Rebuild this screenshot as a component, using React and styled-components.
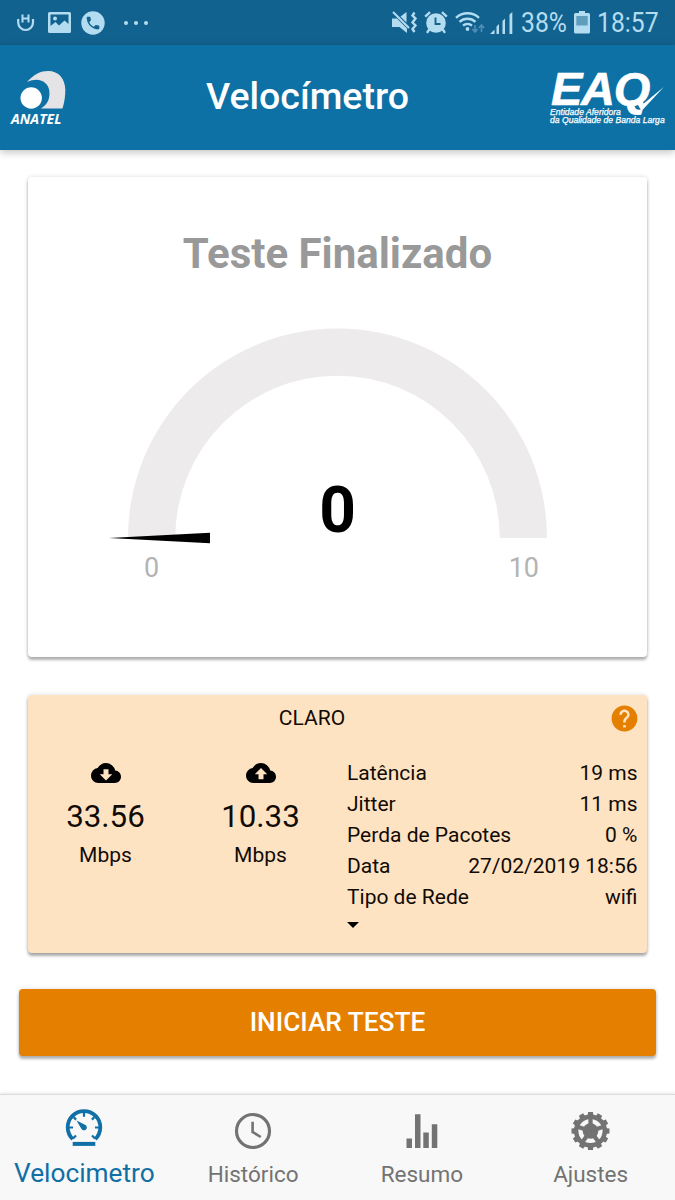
import React from "react";
import styled, { createGlobalStyle } from "styled-components";
import { MdCloudDownload, MdCloudUpload, MdHelp } from "react-icons/md";

const GlobalStyle = createGlobalStyle`
  * {
    box-sizing: border-box;
  }
  body {
    margin: 0;
    background: #fff;
    font-family: Roboto, "Liberation Sans", sans-serif;
  }
  svg {
    display: block;
    flex: none;
  }
`;

const details = [
  { label: "Latência", value: "19 ms" },
  { label: "Jitter", value: "11 ms" },
  { label: "Perda de Pacotes", value: "0 %" },
  { label: "Data", value: "27/02/2019 18:56" },
  { label: "Tipo de Rede", value: "wifi" },
];

const polar = (r, deg) => {
  const a = (deg * Math.PI) / 180;
  return `${(r * Math.cos(a)).toFixed(2)} ${(r * Math.sin(a)).toFixed(2)}`;
};

const UberIcon = () => (
  <svg width="18" height="18" viewBox="0 0 18 18" fill="none" stroke="#b4dcf0" strokeWidth="2.2">
    <path d="M1.200 5v3.500a7.400 7.500 0 0 0 14.800 0V5" />
    <path d="M5.500 0.500v8M11.500 0.500v8M5.500 4.500h6" strokeWidth="2" />
  </svg>
);

const PictureIcon = () => (
  <svg width="23" height="21" viewBox="0 0 23 21">
    <path
      fill="#b4dcf0"
      fillRule="evenodd"
      d="M1.5 0h20A1.5 1.5 0 0 1 23 1.500v18a1.500 1.500 0 0 1-1.500 1.500h-20A1.500 1.500 0 0 1 0 19.500v-18A1.500 1.500 0 0 1 1.500 0zM2.500 2.500V14l5-4 3.500 3.500 5.500-5 4 3.500V2.500zM7 4.600a2 2 0 1 1 0 4 2 2 0 0 1 0-4z"
    />
  </svg>
);

const PhoneIcon = () => (
  <svg width="24" height="24" viewBox="0 0 24 24">
    <circle cx="12" cy="12" r="11.700" fill="#b4dcf0" />
    <path
      fill="#15628f"
      transform="translate(3.600 3.600) scale(.700)"
      d="M6.600 10.800c1.440 2.830 3.760 5.140 6.590 6.590l2.200-2.200c.27-.27.67-.36 1.020-.24 1.120.37 2.330.57 3.590.57.550 0 1 .45 1 1V20c0 .55-.45 1-1 1C10.600 21 3 13.400 3 4c0-.55.45-1 1-1h3.500c.55 0 1 .45 1 1 0 1.250.2 2.450.57 3.570.11.35.03.74-.25 1.020z"
    />
  </svg>
);

const MuteIcon = () => (
  <svg width="25" height="23" viewBox="0 0 25 23">
    <path fill="#b4dcf0" d="M0 7.500h5L15 17.500V22L7.500 16H0zM8.500 5.500L14.500 1v10.500z" />
    <path d="M1 1l16 16" stroke="#b4dcf0" strokeWidth="2.200" />
    <path d="M22.500 1.500l-2 3 3 3-3 4 3 3-3 3.500 2 3" fill="none" stroke="#b4dcf0" strokeWidth="2.400" />
  </svg>
);

const AlarmIcon = () => (
  <svg width="24" height="23" viewBox="0 0 24 23">
    <circle cx="12" cy="12" r="9.800" fill="#b4dcf0" />
    <path d="M1.200 5.600L6 1.200M22.800 5.600L18 1.200M5.500 18L3 21.800M18.500 18l2.500 3.800" stroke="#b4dcf0" strokeWidth="2.400" />
    <path d="M11.500 6.500V13h5" fill="none" stroke="#15628f" strokeWidth="1.900" />
  </svg>
);

const WifiIcon = () => (
  <svg width="30" height="23" viewBox="0 0 30 23">
    <g fill="none" stroke="#b4dcf0" strokeWidth="2.400">
      <path d="M1 6.800a17 17 0 0 1 23 0" />
      <path d="M4.500 10.800a12 12 0 0 1 16 0" />
      <path d="M8 14.600a7 7 0 0 1 9 0" />
    </g>
    <circle cx="12.500" cy="18" r="1.900" fill="#b4dcf0" />
    <path d="M20 14v7M17.300 18l2.700 3 2.700-3M26.500 21v-7M23.800 17l2.700-3 2.700 3" fill="none" stroke="#4c8fb6" strokeWidth="1.700" />
  </svg>
);

const SignalIcon = () => (
  <svg width="23" height="22" viewBox="0 0 23 22" fill="#b4dcf0">
    <path d="M0 22l4.500-4.500V22zM6.500 14.500L9 12v10H6.500zM12.500 9l2.500-2.400V22h-2.500zM19.500 2.500L22.300 0v22h-2.800z" />
  </svg>
);

const BatteryIcon = () => (
  <svg width="16" height="23" viewBox="0 0 16 23">
    <path fill="#b4dcf0" d="M5 0h6v2h3.500A1.500 1.500 0 0 1 16 3.500V21a1.500 1.500 0 0 1-1.500 1.500h-13A1.500 1.500 0 0 1 0 21V3.500A1.500 1.500 0 0 1 1.500 2H5z" />
    <path fill="#5f9dbd" d="M2.300 5h11.400v9.500H2.300z" />
  </svg>
);

const AnatelMark = () => (
  <svg width="46" height="38" viewBox="0 0 46 38">
    <path fill="#e4e4e6" d="M7 11C14 3 21 0 28 0c11 0 17 8 17.300 18.500.1 6.500-.8 12.500-2.800 19H21c7-4.500 9-10 8.300-17.500C28.600 12 20 5 7 11z" />
    <circle cx="11.200" cy="27" r="10.700" fill="#fff" />
  </svg>
);

const EaqCheck = () => (
  <svg width="34" height="24" viewBox="0 0 34 24">
    <path fill="#fff" d="M6 14.500l5.500-1.500 2.300 3.500L33.800 0 11.500 24z" />
  </svg>
);

const Gauge = () => (
  <svg width="440" height="220" viewBox="0 0 440 220">
    <path d="M19 211A209.500 209.500 0 0 1 438 211H390.750A162.250 162.250 0 0 0 66.250 211z" fill="#edebec" />
    <path d="M0 211l101-5.300v10.600z" fill="#000" />
  </svg>
);

const SpeedometerIcon = () => (
  <svg width="38" height="38" viewBox="0 0 38 38" fill="none" stroke="#106fa5">
    <path d="M7.800 30.200A16.300 16.300 0 1 1 30.200 30.200" strokeWidth="3.800" />
    <path d="M19 4v3.800M4 18.500h4M34 18.500h-4M8.500 8l2.600 2.600M29.500 8l-2.600 2.600M8 29.500l3-3M30 29.500l-3-3" strokeWidth="2.200" />
    <path d="M11.500 11.500l9 4.500a2.900 2.900 0 1 1-4 4z" fill="#106fa5" stroke="none" />
    <path d="M7.700 34.900h22.600" strokeWidth="4" />
  </svg>
);

const ClockIcon = () => (
  <svg width="38" height="38" viewBox="0 0 38 38" fill="none" stroke="#737373">
    <circle cx="19" cy="19" r="16.500" strokeWidth="3.200" />
    <path d="M18.600 9.800v10.200l8.200 5" strokeWidth="2.600" />
  </svg>
);

const BarsIcon = () => (
  <svg width="38" height="38" viewBox="0 0 38 38" fill="#737373">
    <path d="M3.500 26.500H9V36H3.500zM12 2.300h5.500V36H12zM20.300 20.500h5.500V36h-5.500zM28.800 12.200h5.500V36h-5.500z" />
  </svg>
);

const GearIcon = () => (
  <svg width="39" height="38" viewBox="-19.500 -19.500 39 39">
    {Array.from({ length: 12 }, (_, i) => (
      <path key={i} d="M-2.500-19.500h5l.6 4.500h-6.200z" fill="#737373" transform={`rotate(${i * 30})`} />
    ))}
    <circle r="14.700" fill="none" stroke="#737373" strokeWidth="4.600" />
    <circle r="8" fill="#737373" />
    {[-90, -18, 54, 126, 198].map((deg) => (
      <path key={deg} d={`M0 0L${polar(14, deg)}`} stroke="#737373" strokeWidth="4.400" />
    ))}
  </svg>
);

const tabs = [
  { label: "Velocimetro", Icon: SpeedometerIcon, active: true },
  { label: "Histórico", Icon: ClockIcon },
  { label: "Resumo", Icon: BarsIcon },
  { label: "Ajustes", Icon: GearIcon },
];

const App = () => {
  return (
    <>
      <GlobalStyle />
      <Screen>
        <StatusBar>
          <Notifications>
            <UberIcon />
            <PictureIcon />
            <PhoneIcon />
            <Dots>
              <Dot />
              <Dot />
              <Dot />
            </Dots>
          </Notifications>
          <SystemIcons>
            <MuteIcon />
            <AlarmIcon />
            <Network>
              <WifiIcon />
              <SignalIcon />
            </Network>
            <StatusText $width={46}>38%</StatusText>
            <BatteryIcon />
            <StatusText $width={62}>18:57</StatusText>
          </SystemIcons>
        </StatusBar>

        <Header>
          <Anatel>
            <AnatelMark />
            <AnatelName>ANATEL</AnatelName>
          </Anatel>
          <Title>Velocímetro</Title>
          <Eaq>
            <EaqName>EAQ</EaqName>
            <EaqCheckBox>
              <EaqCheck />
            </EaqCheckBox>
            <EaqCaption>
              Entidade Aferidora
              <br />
              da Qualidade de Banda Larga
            </EaqCaption>
          </Eaq>
        </Header>

        <Content>
          <GaugeCard>
            <TestState>Teste Finalizado</TestState>
            <GaugeBox>
              <Gauge />
              <Speed>0</Speed>
            </GaugeBox>
            <Scale>
              <span>0</span>
              <span>10</span>
            </Scale>
          </GaugeCard>

          <ResultCard>
            <ResultHeader>
              <Operator>CLARO</Operator>
              <MdHelp size={31} color="#e57f00" />
            </ResultHeader>
            <ResultBody>
              <Rate>
                <MdCloudDownload size={30} />
                <RateValue>33.56</RateValue>
                <RateUnit>Mbps</RateUnit>
              </Rate>
              <Rate>
                <MdCloudUpload size={30} />
                <RateValue>10.33</RateValue>
                <RateUnit>Mbps</RateUnit>
              </Rate>
              <Details>
                {details.map(({ label, value }) => (
                  <DetailRow key={label}>
                    <span>{label}</span>
                    <span>{value}</span>
                  </DetailRow>
                ))}
                <Caret />
              </Details>
            </ResultBody>
          </ResultCard>

          <StartButton type="button">INICIAR TESTE</StartButton>
        </Content>

        <TabBar>
          {tabs.map(({ label, Icon, active }) => (
            <Tab key={label} $active={active}>
              <Icon />
              <TabLabel $active={active}>{label}</TabLabel>
            </Tab>
          ))}
        </TabBar>
      </Screen>
    </>
  );
};

const Screen = styled.div`
  display: flex;
  flex-direction: column;
  width: 675px;
  height: 1200px;
  overflow: hidden;
  background: #fff;
`;

const StatusBar = styled.div`
  display: flex;
  justify-content: space-between;
  align-items: center;
  height: 45px;
  padding: 0 16px 0 17px;
  background: #12628f;
`;
const Notifications = styled.div`
  display: flex;
  align-items: center;
  gap: 12px;
  svg:first-child {
    margin-right: 1px;
  }
  svg:nth-child(3) {
    margin-left: -2px;
  }
`;
const Dots = styled.div`
  display: flex;
  gap: 6px;
  margin-left: 7px;
`;
const Dot = styled.span`
  width: 4px;
  height: 4px;
  border-radius: 50%;
  background: #b4dcf0;
`;
const SystemIcons = styled.div`
  display: flex;
  align-items: center;
  gap: 7px;
`;
const Network = styled.div`
  display: flex;
  align-items: center;
  gap: 5px;
  margin-right: 1px;
`;
const StatusText = styled.span`
  width: ${(props) => props.$width}px;
  padding-top: 2px;
  color: #b4dcf0;
  font-size: 27px;
  line-height: 43px;
  white-space: nowrap;
  transform: scaleX(0.915);
  transform-origin: left;
`;

const Header = styled.header`
  position: relative;
  z-index: 1;
  display: flex;
  justify-content: space-between;
  height: 105px;
  padding: 0 11px 0 10px;
  background: #0e71a6;
  box-shadow: 0 2px 8px rgba(0, 0, 0, 0.26);
`;
const Anatel = styled.div`
  display: flex;
  flex-direction: column;
  width: 55px;
  padding-top: 26px;
  svg {
    margin-left: 9.500px;
  }
`;
const AnatelName = styled.span`
  margin: 2px 0 0 1px;
  color: #fff;
  font: italic bold 14px/15px "Open Sans", sans-serif;
`;
const Title = styled.h1`
  margin: 0;
  color: #fff;
  font-size: 37.500px;
  font-weight: 500;
  line-height: 103px;
`;
const Eaq = styled.div`
  position: relative;
  width: 114px;
  padding-top: 23px;
  color: #fff;
`;
const EaqName = styled.div`
  padding-left: 1px;
  font: italic bold 47px/42px "Liberation Sans", sans-serif;
  letter-spacing: -1.300px;
  -webkit-text-stroke: 0.600px #fff;
`;
const EaqCheckBox = styled.div`
  position: absolute;
  top: 42px;
  right: 0;
`;
const EaqCaption = styled.div`
  margin-top: -1px;
  font: italic 8.600px/7.500px "Liberation Sans", sans-serif;
  -webkit-text-stroke: 0.250px #fff;
  white-space: nowrap;
`;

const Content = styled.main`
  display: flex;
  flex-direction: column;
  flex: 1;
  padding: 27px 19px 0;
`;
const GaugeCard = styled.section`
  display: flex;
  flex-direction: column;
  height: 480px;
  margin: 0 9px;
  padding-top: 51px;
  border-radius: 4px;
  background: #fff;
  box-shadow: 0 3px 3px rgba(0, 0, 0, 0.28), 0 0 4px rgba(0, 0, 0, 0.16);
`;
const TestState = styled.h2`
  margin: 0;
  color: #999;
  font-size: 42px;
  font-weight: 700;
  line-height: 52px;
  text-align: center;
`;
const GaugeBox = styled.div`
  position: relative;
  height: 220px;
  margin: 47px 0 0 81px;
`;
const Speed = styled.div`
  position: absolute;
  top: 148px;
  left: 178.500px;
  width: 100px;
  font-size: 64px;
  font-weight: 700;
  line-height: 72px;
  text-align: center;
`;
const Scale = styled.div`
  display: flex;
  justify-content: space-between;
  padding: 5px 108px 0 116px;
  color: #b3b3b3;
  font-size: 27px;
  line-height: 32px;
`;

const ResultCard = styled.section`
  height: 258px;
  margin: 38px 9px 0;
  border-radius: 4px;
  background: #fee3c3;
  box-shadow: 0 3px 3px rgba(0, 0, 0, 0.3), 0 0 4px rgba(0, 0, 0, 0.16);
  color: #110b05;
`;
const ResultHeader = styled.div`
  display: flex;
  align-items: center;
  height: 47px;
  padding-right: 7px;
`;
const Operator = styled.div`
  flex: 1;
  padding: 0 13px 1px 0;
  font-size: 21px;
  text-align: center;
`;
const ResultBody = styled.div`
  display: flex;
  padding-right: 9.500px;
`;
const Rate = styled.div`
  display: flex;
  flex-direction: column;
  align-items: center;
  width: 155px;
  padding-top: 16px;
  svg {
    color: #000;
  }
`;
const RateValue = styled.div`
  margin-top: 10px;
  font-size: 31.300px;
  line-height: 38px;
`;
const RateUnit = styled.div`
  margin-top: 7px;
  font-size: 21px;
  line-height: 24px;
`;
const Details = styled.div`
  flex: 1;
  padding: 16px 0 0 9px;
`;
const DetailRow = styled.div`
  display: flex;
  justify-content: space-between;
  font-size: 21px;
  line-height: 31px;
`;
const Caret = styled.div`
  width: 12px;
  margin-top: 9px;
  border: 6px solid transparent;
  border-top-color: #000;
  border-bottom: 0;
`;

const StartButton = styled.button`
  height: 67px;
  margin-top: 36px;
  padding: 0 0 2px;
  border: 0;
  border-radius: 4px;
  background: #e57f00;
  box-shadow: 0 3px 3px rgba(0, 0, 0, 0.28), 0 0 4px rgba(0, 0, 0, 0.14);
  color: #fff;
  font-family: inherit;
  font-size: 26.250px;
  font-weight: 500;
`;

const TabBar = styled.nav`
  display: flex;
  height: 106px;
  border-top: 1px solid #dcdcdc;
  background: #f8f8f8;
  box-shadow: 0 -1px 3px rgba(0, 0, 0, 0.1);
`;
const Tab = styled.div`
  display: flex;
  flex: 1 0 0;
  flex-direction: column;
  align-items: center;
  padding-top: ${(props) => (props.$active ? 14 : 17)}px;
`;
const TabLabel = styled.span`
  margin-top: ${(props) => (props.$active ? 10 : 8)}px;
  color: ${(props) => (props.$active ? "#106fa5" : "#737373")};
  font-size: ${(props) => (props.$active ? 26.25 : 22.5)}px;
  line-height: 32px;
`;

export default App;
